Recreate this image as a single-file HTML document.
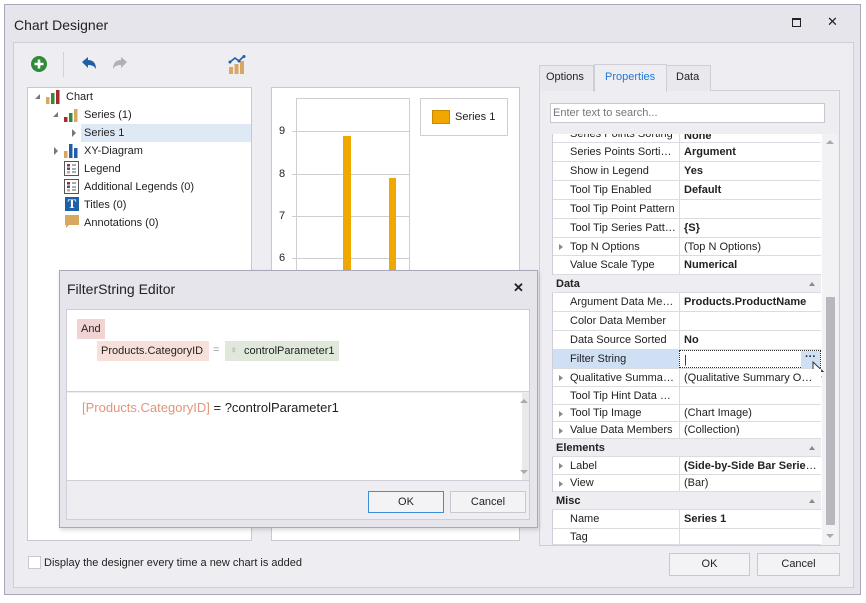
<!DOCTYPE html>
<html><head><meta charset="utf-8"><style>
*{box-sizing:border-box;margin:0;padding:0}
body{width:866px;height:603px;background:#fff;font-family:"Liberation Sans",sans-serif;font-size:11px;color:#222;position:relative;overflow:hidden}
.a{position:absolute}
.t{position:absolute;white-space:nowrap;line-height:14px}
.row{position:absolute;left:553px;width:268px;height:19px;border-bottom:1px solid #dcdbe2;background:#fff}
.row .n{position:absolute;left:17px;top:3px;white-space:nowrap;width:106px;overflow:hidden;text-overflow:ellipsis}
.row .v{position:absolute;left:126px;top:0;height:18px;width:142px;border-left:1px solid #dcdbe2;padding:3px 4px 0;white-space:nowrap;overflow:hidden;text-overflow:ellipsis}
.row .ar{position:absolute;left:6px;top:6px;width:0;height:0;border-left:4px solid #888;border-top:3.5px solid transparent;border-bottom:3.5px solid transparent}
.cat{position:absolute;left:552px;width:269px;height:18px;background:#eeedf2;font-weight:bold;padding:3px 4px 0;border-bottom:1px solid #dcdbe2}
.cat:after{content:"";position:absolute;right:6px;top:7px;border-bottom:4px solid #888;border-left:3.5px solid transparent;border-right:3.5px solid transparent}
b{font-weight:bold}
.btn{position:absolute;border:1px solid #c9c8d0;background:#f3f3f6;text-align:center;line-height:20px}
.tr{position:absolute;white-space:nowrap;line-height:18px}
</style></head><body>
<div class="a" style="left:4px;top:4px;width:857px;height:591px;background:#e6e5ec;border:1px solid #a9a8bb"></div>
<div class="t" style="left:14px;top:16px;font-size:14px;line-height:18px">Chart Designer</div>
<div class="a" style="left:792px;top:18px;width:9px;height:9px;border:1.5px solid #222;border-top-width:2px"></div>
<div class="t" style="left:827px;top:15px;font-size:13px">✕</div>
<div class="a" style="left:13px;top:42px;width:841px;height:546px;background:#eeedf2;border:1px solid #cfcdd8"></div>
<svg class="a" style="left:30px;top:55px" width="18" height="18"><circle cx="9" cy="9" r="8" fill="#2e8b3a"/><path d="M9 4.5v9M4.5 9h9" stroke="#fff" stroke-width="2.6"/></svg>
<div class="a" style="left:63px;top:52px;width:1px;height:25px;background:#d2d1d9"></div>
<svg class="a" style="left:80px;top:56px" width="18" height="16"><path d="M2 6 L8 1 V4 C13 4 16 7 16 13 C14 10 12 9 8 9 V12 Z" fill="#1f5fa8"/></svg>
<svg class="a" style="left:111px;top:56px" width="18" height="16"><path d="M16 6 L10 1 V4 C5 4 2 7 2 13 C4 10 6 9 10 9 V12 Z" fill="#b0b0b8"/></svg>
<svg class="a" style="left:228px;top:55px" width="18" height="19"><rect x="1" y="12" width="4" height="7" fill="#d9a860"/><rect x="6.5" y="9" width="4" height="10" fill="#d9a860"/><rect x="12" y="6" width="4" height="13" fill="#d9a860"/><path d="M2 7 L7 3 L11 6 L16 1" stroke="#1f5fa8" stroke-width="1.6" fill="none"/><circle cx="2" cy="7" r="1.5" fill="#1f5fa8"/><circle cx="11" cy="6" r="1.5" fill="#1f5fa8"/><circle cx="16" cy="1.5" r="1.5" fill="#1f5fa8"/></svg>
<div class="a" style="left:27px;top:87px;width:225px;height:454px;background:#fff;border:1px solid #c9c8d0"></div>
<div class="a" style="left:81px;top:124px;width:170px;height:18px;background:#dfe9f6"></div>
<div class="a" style="left:35px;top:94px;border-right:5px solid #777;border-top:5px solid transparent"></div>
<div class="a" style="left:53px;top:112px;border-right:5px solid #777;border-top:5px solid transparent"></div>
<div class="a" style="left:72px;top:129px;border-left:4px solid #777;border-top:4px solid transparent;border-bottom:4px solid transparent"></div>
<div class="a" style="left:54px;top:147px;border-left:4px solid #777;border-top:4px solid transparent;border-bottom:4px solid transparent"></div>
<svg class="a" style="left:46px;top:90px" width="16" height="14"><rect x="0" y="7" width="3.5" height="7" fill="#d9a860"/><rect x="5" y="3" width="3.5" height="11" fill="#2e8b3a"/><rect x="10" y="0" width="3.5" height="14" fill="#a52a2a"/></svg>
<div class="tr" style="left:66px;top:88px">Chart</div>
<svg class="a" style="left:64px;top:108px" width="16" height="14"><rect x="0" y="9" width="3.5" height="5" fill="#a52a2a"/><rect x="5" y="5" width="3.5" height="9" fill="#2e8b3a"/><rect x="10" y="1" width="3.5" height="13" fill="#d9a860"/></svg>
<div class="tr" style="left:84px;top:106px">Series (1)</div>
<div class="tr" style="left:84px;top:124px">Series 1</div>
<svg class="a" style="left:64px;top:144px" width="16" height="14"><rect x="0" y="7" width="3.5" height="7" fill="#d9a860"/><rect x="5" y="0" width="3.5" height="14" fill="#1f5fa8"/><rect x="10" y="4" width="3.5" height="10" fill="#1f5fa8"/></svg>
<div class="tr" style="left:84px;top:142px">XY-Diagram</div>
<svg class="a" style="left:64px;top:161px" width="15" height="15"><rect x="0.5" y="0.5" width="14" height="14" fill="#fff" stroke="#555"/><rect x="3" y="3" width="3" height="2.5" fill="#a52a2a"/><rect x="3" y="6.5" width="3" height="2.5" fill="#1f5fa8"/><rect x="3" y="10" width="3" height="2.5" fill="#d9a860"/><path d="M8 4h4M8 8h4M8 11h4" stroke="#555"/></svg>
<div class="tr" style="left:84px;top:160px">Legend</div>
<svg class="a" style="left:64px;top:179px" width="15" height="15"><rect x="0.5" y="0.5" width="14" height="14" fill="#fff" stroke="#555"/><rect x="3" y="3" width="3" height="2.5" fill="#a52a2a"/><rect x="3" y="6.5" width="3" height="2.5" fill="#1f5fa8"/><rect x="3" y="10" width="3" height="2.5" fill="#d9a860"/><path d="M8 4h4M8 8h4M8 11h4" stroke="#555"/></svg>
<div class="tr" style="left:84px;top:178px">Additional Legends (0)</div>
<div class="a" style="left:65px;top:197px;width:14px;height:14px;background:#1f5fa8;color:#fff;font-weight:bold;font-family:'Liberation Serif',serif;font-size:13px;line-height:14px;text-align:center">T</div>
<div class="tr" style="left:84px;top:196px">Titles (0)</div>
<svg class="a" style="left:65px;top:215px" width="14" height="14"><path d="M0 0h14v10H4l-3 3v-3H0z" fill="#d9a860"/></svg>
<div class="tr" style="left:84px;top:214px">Annotations (0)</div>
<div class="a" style="left:271px;top:87px;width:249px;height:454px;background:#fff;border:1px solid #c9c8d0"></div>
<div class="a" style="left:296px;top:98px;width:114px;height:200px;border:1px solid #cfcfcf;border-bottom:none"></div>
<div class="a" style="left:292px;top:131px;width:118px;height:1px;background:#cfcfcf"></div>
<div class="a" style="left:292px;top:174px;width:118px;height:1px;background:#cfcfcf"></div>
<div class="a" style="left:292px;top:216px;width:118px;height:1px;background:#cfcfcf"></div>
<div class="a" style="left:292px;top:258px;width:118px;height:1px;background:#cfcfcf"></div>
<div class="t" style="left:279px;top:124px;font-size:11px">9</div>
<div class="t" style="left:279px;top:167px;font-size:11px">8</div>
<div class="t" style="left:279px;top:209px;font-size:11px">7</div>
<div class="t" style="left:279px;top:251px;font-size:11px">6</div>
<div class="a" style="left:343px;top:136px;width:8px;height:160px;background:#f0a800"></div>
<div class="a" style="left:389px;top:178px;width:7px;height:120px;background:#f0a800"></div>
<div class="a" style="left:420px;top:98px;width:88px;height:38px;border:1px solid #cfcfcf"></div>
<div class="a" style="left:432px;top:110px;width:18px;height:14px;background:#f0a800;border:1px solid #c88a00"></div>
<div class="t" style="left:455px;top:110px">Series 1</div>
<div class="a" style="left:539px;top:90px;width:301px;height:456px;background:#eeedf2;border:1px solid #cfcdd8"></div>
<div class="a" style="left:539px;top:65px;width:55px;height:26px;border:1px solid #cfcdd8;border-bottom:none;background:#e9e8ee"></div>
<div class="t" style="left:546px;top:70px">Options</div>
<div class="a" style="left:594px;top:64px;width:73px;height:28px;border:1px solid #cfcdd8;border-bottom:none;background:#eeedf2"></div>
<div class="t" style="left:605px;top:70px;color:#1e7ad8">Properties</div>
<div class="a" style="left:666px;top:65px;width:45px;height:26px;border:1px solid #cfcdd8;border-bottom:none;background:#e9e8ee"></div>
<div class="t" style="left:676px;top:70px">Data</div>
<div class="a" style="left:550px;top:103px;width:275px;height:20px;background:#fff;border:1px solid #c9c8d0"></div>
<div class="t" style="left:553px;top:106px;color:#777">Enter text to search...</div>
<div class="a" style="left:552px;top:134px;width:286px;height:411px;background:#fff;border-left:1px solid #cfcdd8"></div>
<div class="a" style="left:822px;top:134px;width:16px;height:411px;background:#f2f2f4"></div>
<div class="a" style="left:826px;top:297px;width:9px;height:228px;background:#b7b7bd"></div>
<div class="a" style="left:826px;top:140px;border-bottom:4px solid #aaa;border-left:4px solid transparent;border-right:4px solid transparent"></div>
<div class="a" style="left:826px;top:534px;border-top:4px solid #aaa;border-left:4px solid transparent;border-right:4px solid transparent"></div>
<div class="row" style="top:134px;height:9px;overflow:hidden"><div class="n" style="top:-6px">Series Points Sorting</div><div class="v" style="top:-7px"><b>None</b></div></div>
<div class="row" style="top:143px"><div class="n">Series Points Sorting Mode</div><div class="v"><b>Argument</b></div></div>
<div class="row" style="top:162px"><div class="n">Show in Legend</div><div class="v"><b>Yes</b></div></div>
<div class="row" style="top:181px"><div class="n">Tool Tip Enabled</div><div class="v"><b>Default</b></div></div>
<div class="row" style="top:200px"><div class="n">Tool Tip Point Pattern</div><div class="v"></div></div>
<div class="row" style="top:219px"><div class="n">Tool Tip Series Pattern</div><div class="v"><b>{S}</b></div></div>
<div class="row" style="top:238px;height:18px"><span class="ar"></span><div class="n">Top N Options</div><div class="v">(Top N Options)</div></div>
<div class="row" style="top:256px"><div class="n">Value Scale Type</div><div class="v"><b>Numerical</b></div></div>
<div class="cat" style="top:275px">Data</div>
<div class="row" style="top:293px"><div class="n">Argument Data Member</div><div class="v"><b>Products.ProductName</b></div></div>
<div class="row" style="top:312px"><div class="n">Color Data Member</div><div class="v"></div></div>
<div class="row" style="top:331px"><div class="n">Data Source Sorted</div><div class="v"><b>No</b></div></div>
<div class="row" style="top:350px;background:#cfe0f4"><div class="n">Filter String</div><div class="v" style="background:#fff;border:1px dotted #333">|</div></div>
<div class="a" style="left:801px;top:351px;width:19px;height:17px;background:#cfe0f4;font-weight:bold;text-align:center;line-height:12px">···</div>
<svg class="a" style="left:812px;top:361px" width="14" height="20"><path d="M1 1 L1 15 L4.5 11.5 L7 17 L9 16 L6.5 10.5 L11 10.5 Z" fill="#fff" stroke="#333"/></svg>
<div class="row" style="top:369px;height:18px"><span class="ar"></span><div class="n">Qualitative Summary Options</div><div class="v">(Qualitative Summary Options)</div></div>
<div class="row" style="top:387px;height:18px"><div class="n">Tool Tip Hint Data Member</div><div class="v"></div></div>
<div class="row" style="top:405px;height:17px"><span class="ar"></span><div class="n" style="top:2px">Tool Tip Image</div><div class="v" style="padding-top:2px">(Chart Image)</div></div>
<div class="row" style="top:422px;height:17px"><span class="ar"></span><div class="n" style="top:2px">Value Data Members</div><div class="v" style="padding-top:2px">(Collection)</div></div>
<div class="cat" style="top:439px">Elements</div>
<div class="row" style="top:457px;height:18px"><span class="ar"></span><div class="n">Label</div><div class="v"><b>(Side-by-Side Bar Series Label)</b></div></div>
<div class="row" style="top:475px;height:17px"><span class="ar"></span><div class="n" style="top:2px">View</div><div class="v" style="padding-top:2px">(Bar)</div></div>
<div class="cat" style="top:492px">Misc</div>
<div class="row" style="top:510px"><div class="n">Name</div><div class="v"><b>Series 1</b></div></div>
<div class="row" style="top:529px;height:16px"><div class="n" style="top:2px">Tag</div><div class="v"></div></div>
<div class="a" style="left:59px;top:270px;width:479px;height:258px;background:#e6e5ec;border:1px solid #a9a8bb;box-shadow:1px 2px 4px rgba(0,0,0,.15)"></div>
<div class="t" style="left:67px;top:281px;font-size:14px;line-height:17px">FilterString Editor</div>
<div class="t" style="left:513px;top:281px;font-size:13px;font-weight:bold">✕</div>
<div class="a" style="left:66px;top:309px;width:464px;height:211px;background:#eeedf2;border:1px solid #cfcdd8"></div>
<div class="a" style="left:67px;top:310px;width:462px;height:82px;background:#fff;border-bottom:1px solid #cfcdd8"></div>
<div class="a" style="left:77px;top:319px;width:28px;height:20px;background:#f2d3d3"></div>
<div class="t" style="left:81px;top:322px">And</div>
<div class="a" style="left:97px;top:341px;width:112px;height:20px;background:#f8e0da"></div>
<div class="t" style="left:101px;top:344px">Products.CategoryID</div>
<div class="t" style="left:213px;top:343px;color:#999">=</div>
<div class="a" style="left:225px;top:341px;width:114px;height:20px;background:#dfe8da"></div>
<div class="t" style="left:230px;top:344px;color:#999;font-size:10px">♀</div>
<div class="t" style="left:244px;top:344px">controlParameter1</div>
<div class="a" style="left:67px;top:393px;width:455px;height:87px;background:#fff"></div>
<div class="a" style="left:522px;top:393px;width:7px;height:87px;background:#e9e9ec"></div>
<div class="a" style="left:520px;top:399px;border-bottom:4px solid #aaa;border-left:4px solid transparent;border-right:4px solid transparent"></div>
<div class="a" style="left:520px;top:470px;border-top:4px solid #aaa;border-left:4px solid transparent;border-right:4px solid transparent"></div>
<div class="a" style="left:67px;top:480px;width:462px;height:1px;background:#cfcdd8"></div>
<div class="t" style="left:82px;top:400px;font-size:13px;line-height:16px"><span style="color:#e0967a">[Products.CategoryID]</span> = ?controlParameter1</div>
<div class="btn" style="left:368px;top:491px;width:76px;height:22px;border-color:#3c8fd6">OK</div>
<div class="btn" style="left:450px;top:491px;width:76px;height:22px">Cancel</div>
<div class="a" style="left:28px;top:556px;width:13px;height:13px;background:#fff;border:1px solid #c9c8d0"></div>
<div class="t" style="left:44px;top:556px">Display the designer every time a new chart is added</div>
<div class="btn" style="left:669px;top:553px;width:81px;height:23px">OK</div>
<div class="btn" style="left:757px;top:553px;width:83px;height:23px">Cancel</div>
</body></html>
